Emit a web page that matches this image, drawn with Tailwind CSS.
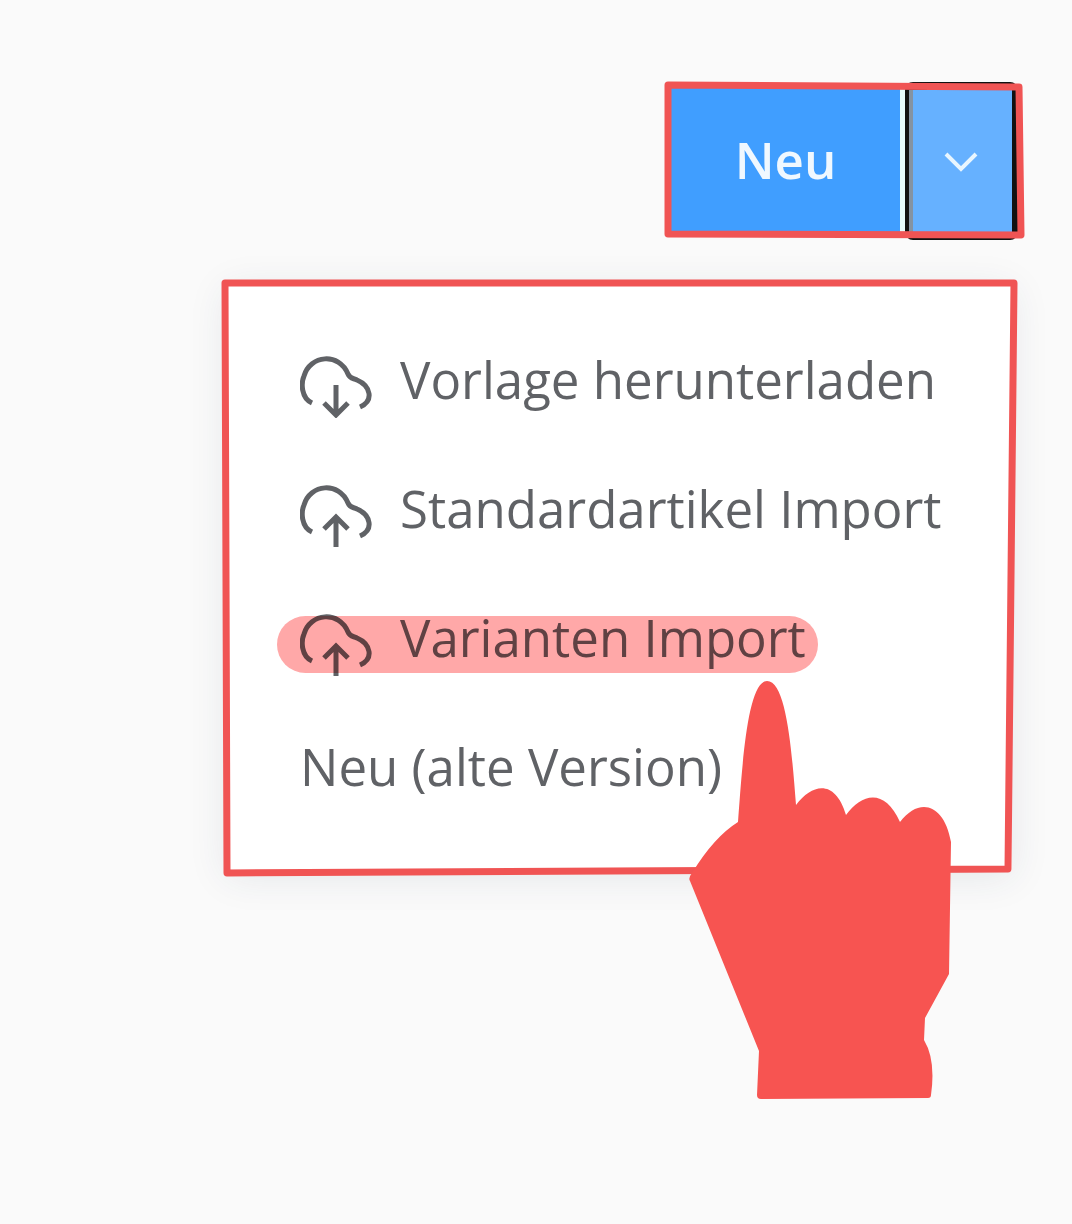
<!DOCTYPE html>
<html lang="de">
<head>
    <meta charset="UTF-8">
    <meta name="viewport" content="width=device-width, initial-scale=1.0">
    <title>Artikel Import</title>
    <script src="https://cdn.jsdelivr.net/npm/@tailwindcss/browser@4"></script>
</head>
<body class="min-h-screen bg-[#fafafa] font-['Open_Sans',sans-serif] text-[#606266]">
    <main class="flex flex-col items-end pt-[88px] pb-16 pl-6 pr-[54px]">

        <!-- Split button -->
        <div class="relative flex h-[146px] gap-[5px] bg-[#e6fbfb]">
            <button type="button" class="w-[229px] bg-[#409eff] pb-1 text-[51px] font-semibold text-[#f0f8ff]">Neu</button>
            <button type="button" aria-label="Weitere Optionen" aria-expanded="true"
                    class="-my-[6px] flex w-[113px] items-center justify-center rounded-lg border-y-8 border-l-4 border-r-6 border-[#111] bg-[#66b1ff] shadow-[inset_4px_0_0_#8493a3]">
                <svg class="h-6 w-9" viewBox="0 0 36 24" fill="none" stroke="#e8f6ff" stroke-width="4">
                    <path d="M3 5 L18 20 L33 5"/>
                </svg>
            </button>
            <svg class="pointer-events-none absolute inset-0 h-full w-full overflow-visible" viewBox="0 0 347 146" preserveAspectRatio="none"
                 fill="none" stroke="#f05454" stroke-width="7" stroke-linejoin="round">
                <path d="M-3 -3 L348 -1 L350 147 L-3 146 Z"/>
            </svg>
        </div>

        <!-- Dropdown menu -->
        <div class="relative mt-[49px] mr-[6px] w-full max-w-[786px] bg-white pt-8 pb-10 shadow-[0_6px_36px_rgba(40,60,90,0.10)]">
            <ul class="text-[51px]">
                <li>
                    <button type="button" class="flex h-[129px] w-full items-center gap-7 pl-[74px] text-left whitespace-nowrap">
                        <svg class="h-[76px] w-[72px] shrink-0" viewBox="0 0 72 76" fill="none" stroke="#606266" stroke-width="5">
                            <path d="M12 61 C1 56 1 41 4 34 C10 13 39 10 48 32 C50 37 53 36 57 38 C71 44 74 59 60 65"/>
                            <path d="M36 43 V73 M24 61 L36 73 L48 61"/>
                        </svg>
                        Vorlage herunterladen
                    </button>
                </li>
                <li>
                    <button type="button" class="flex h-[129px] w-full items-center gap-7 pl-[74px] text-left whitespace-nowrap">
                        <svg class="h-[76px] w-[72px] shrink-0" viewBox="0 0 72 76" fill="none" stroke="#606266" stroke-width="5">
                            <path d="M12 61 C1 56 1 41 4 34 C10 13 39 10 48 32 C50 37 53 36 57 38 C71 44 74 59 60 65"/>
                            <path d="M36 76 V46 M24 58 L36 46 L48 58"/>
                        </svg>
                        Standardartikel Import
                    </button>
                </li>
                <li class="relative">
                    <button type="button" class="flex h-[129px] w-full items-center gap-7 pl-[74px] text-left whitespace-nowrap">
                        <svg class="h-[76px] w-[72px] shrink-0" viewBox="0 0 72 76" fill="none" stroke="#606266" stroke-width="5">
                            <path d="M12 61 C1 56 1 41 4 34 C10 13 39 10 48 32 C50 37 53 36 57 38 C71 44 74 59 60 65"/>
                            <path d="M36 76 V46 M24 58 L36 46 L48 58"/>
                        </svg>
                        Varianten Import
                    </button>
                    <!-- Marker -->
                    <span class="pointer-events-none absolute top-[43px] left-[51px] h-[57px] w-[541px] rounded-full bg-[#ffa8a8] mix-blend-multiply"></span>
                </li>
                <li>
                    <button type="button" class="flex h-[129px] w-full items-center pl-[74px] text-left whitespace-nowrap">Neu (alte Version)</button>
                </li>
            </ul>
            <svg class="pointer-events-none absolute inset-0 h-full w-full overflow-visible" viewBox="0 0 786 588" preserveAspectRatio="none"
                 fill="none" stroke="#f05454" stroke-width="7" stroke-linejoin="round">
                <path d="M-1 0 L788 0 L782 586 L1 590 Z"/>
            </svg>

            <!-- Pointing hand -->
            <svg class="pointer-events-none absolute top-[398px] right-[61px] h-[419px] w-[262px]" viewBox="689 681 262 419" fill="#f75451">
                <path d="M738 822 C742 770 747 681 767 681 C787 681 792 755 796 805 C813 782 836 780 846 815 C862 793 885 788 900 822 C919 797 944 803 951 842 L949 974 L925 1018 L924 1040 Q936 1060 931 1095 Q931 1098 928 1098 L761 1099 Q757 1099 757 1095 L759 1051 L690 881 Q688 878 692 873 Q714 837 738 822 Z"/>
            </svg>
        </div>
    </main>
</body>
</html>
